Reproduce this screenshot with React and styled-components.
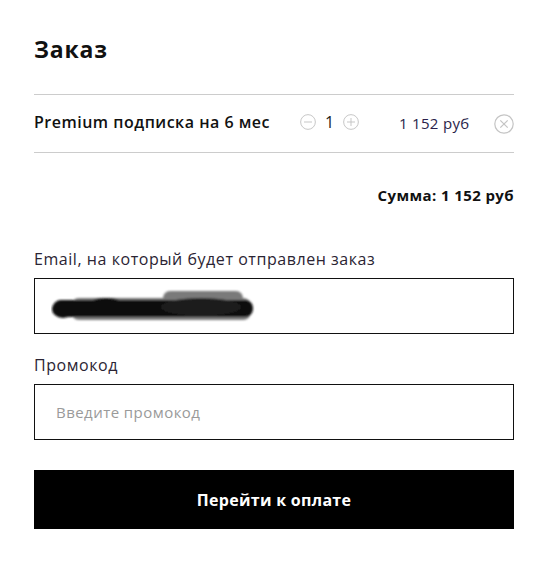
import React from 'react'
import styled, { createGlobalStyle } from 'styled-components'

const GlobalStyle = createGlobalStyle`
    body {
        margin: 0;
        background: #fff;
        font-family: "Open Sans", "Noto Sans", sans-serif;
        color: #111;
    }
`

const Container = styled.div`
    width: 480px;
    padding: 30px 34px 40px;
`

const Title = styled.h1`
    margin: 0 0 26px;
    font-size: 23px;
    font-weight: 700;
    line-height: 38px;
    letter-spacing: 0.8px;
    color: #111;
`

const ItemRow = styled.div`
    display: flex;
    align-items: center;
    height: 57px;
    border-top: 1px solid #ccc;
    border-bottom: 1px solid #ccc;
`

const ItemName = styled.div`
    width: 266px;
    font-size: 16px;
    font-weight: 600;
    letter-spacing: 0.5px;
    margin-top: -3px;
`

const Counter = styled.div`
    display: flex;
    align-items: center;
    gap: 5px;
    width: 99px;
    margin-top: -4px;
`

const Qty = styled.span`
    width: 17px;
    text-align: center;
    font-size: 16px;
    color: #222;
`

const Price = styled.div`
    width: 95px;
    font-size: 15px;
    letter-spacing: 0.3px;
    color: #2a1e4a;
    margin-top: -2px;
`

const Remove = styled.div`
    margin-left: auto;
    display: flex;
`

const Sum = styled.div`
    margin-top: 32px;
    text-align: right;
    font-size: 15px;
    font-weight: 700;
    line-height: 20px;
    letter-spacing: 0.4px;
`

const Field = styled.div`
    margin-top: ${p => p.$top}px;
`

const Label = styled.div`
    font-size: 16px;
    line-height: 20px;
    letter-spacing: 0.55px;
    color: #2b2433;
    margin-bottom: 9px;
`

const InputBox = styled.div`
    box-sizing: border-box;
    height: 56px;
    border: 1px solid #111;
    display: flex;
    align-items: center;
    padding-left: 16px;
`

const Input = styled.input`
    box-sizing: border-box;
    width: 100%;
    height: 56px;
    border: 1px solid #111;
    padding: 0 21px;
    font-family: inherit;
    font-size: 15px;
    letter-spacing: 0.45px;
    outline: none;
    &::placeholder { color: #9a9a9a; }
`

const PayButton = styled.button`
    display: block;
    width: 100%;
    height: 59px;
    margin-top: 30px;
    border: none;
    background: #000;
    color: #fff;
    font-family: inherit;
    font-size: 16px;
    font-weight: 700;
    letter-spacing: 0.3px;
    cursor: pointer;
`

const CircleIcon = ({ size = 16, type }) => (
    <svg width={size} height={size} viewBox="0 0 20 20" fill="none" stroke="#c4c4c4" strokeWidth="1.2">
        <circle cx="10" cy="10" r="9.2" />
        {type !== 'close' && <line x1="5" y1="10" x2="15" y2="10" />}
        {type === 'plus' && <line x1="10" y1="5" x2="10" y2="15" />}
        {type === 'close' && <>
            <line x1="6.3" y1="6.3" x2="13.7" y2="13.7" />
            <line x1="13.7" y1="6.3" x2="6.3" y2="13.7" />
        </>}
    </svg>
)

// redacted email scribble
const Scribble = () => (
    <svg width="206" height="36" viewBox="0 0 206 36">
        <defs>
            <filter id="soft"><feGaussianBlur stdDeviation="0.8" /></filter>
        </defs>
        <g filter="url(#soft)">
            <rect x="20" y="10" width="180" height="22" rx="8" fill="#7a7a7a" />
            <rect x="112" y="3" width="80" height="16" rx="7" fill="#7a7a7a" />
            <rect x="2" y="12" width="200" height="17" rx="8" fill="#111" />
            <ellipse cx="12" cy="21" rx="11" ry="9" fill="#111" />
            <ellipse cx="55" cy="18" rx="20" ry="8" fill="#111" />
            <ellipse cx="150" cy="19" rx="40" ry="9" fill="#1a1a1a" />
        </g>
    </svg>
)

const App = () => (
    <>
        <GlobalStyle />
        <Container>
            <Title>Заказ</Title>
            <ItemRow>
                <ItemName>Premium подписка на 6 мес</ItemName>
                <Counter>
                    <CircleIcon type="minus" />
                    <Qty>1</Qty>
                    <CircleIcon type="plus" />
                </Counter>
                <Price>1 152 руб</Price>
                <Remove><CircleIcon type="close" size={20} /></Remove>
            </ItemRow>
            <Sum>Сумма: 1 152 руб</Sum>
            <Field $top={44}>
                <Label>Email, на который будет отправлен заказ</Label>
                <InputBox><Scribble /></InputBox>
            </Field>
            <Field $top={21}>
                <Label>Промокод</Label>
                <Input placeholder="Введите промокод" />
            </Field>
            <PayButton>Перейти к оплате</PayButton>
        </Container>
    </>
)

export default App
